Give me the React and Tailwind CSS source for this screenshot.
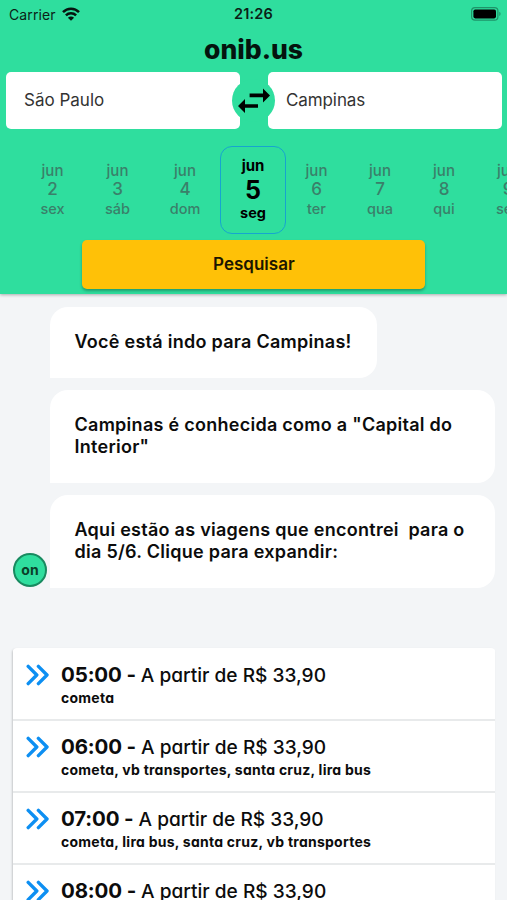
import React from 'react';

const days = [
    { month: 'jun', day: '2', week: 'sex', width: 'w-[65px]' },
    { month: 'jun', day: '3', week: 'sáb', width: 'w-[65px]' },
    { month: 'jun', day: '4', week: 'dom', width: 'w-[70px]' },
    { month: 'jun', day: '5', week: 'seg', width: 'w-[66px]', selected: true },
    { month: 'jun', day: '6', week: 'ter', width: 'w-[61px]' },
    { month: 'jun', day: '7', week: 'qua', width: 'w-[66px]' },
    { month: 'jun', day: '8', week: 'qui', width: 'w-[62px]' },
    { month: 'jun', day: '9', week: 'sex', width: 'w-[66px]' },
];

const trips = [
    { time: '05:00', price: 'R$ 33,90', companies: 'cometa' },
    { time: '06:00', price: 'R$ 33,90', companies: 'cometa, vb transportes, santa cruz, lira bus' },
    { time: '07:00', price: 'R$ 33,90', companies: 'cometa, lira bus, santa cruz, vb transportes' },
    { time: '08:00', price: 'R$ 33,90' },
];

const WifiIcon = () => (
    <svg width="18" height="14" viewBox="0 0 18 14" fill="none" stroke="#06150f" strokeWidth="2.5">
        <path d="M1 5.2C5.4 0.6 12.6 0.6 17 5.2" />
        <path d="M3.9 8.4C6.7 5.6 11.3 5.6 14.1 8.4" />
        <path d="M9 13.8L5.9 10.7C7.6 9.1 10.4 9.1 12.1 10.7Z" fill="#06150f" stroke="none" />
    </svg>
);

const BatteryIcon = () => (
    <svg width="31" height="14" viewBox="0 0 31 14" fill="none">
        <rect x="0.6" y="0.6" width="26.3" height="12.6" rx="3.4" stroke="#1f9469" strokeWidth="1.2" />
        <rect x="2.4" y="2.4" width="22.6" height="9" rx="1.8" fill="#000" />
        <path d="M28.3 4.8C30 5.4 30 8.4 28.3 9Z" fill="#1f9469" />
    </svg>
);

const SwapIcon = () => (
    <svg width="34" height="26" viewBox="0 0 34 26" fill="#000">
        <path d="M12.6 5.6H26V0.4L33 7.4L26 14.4V9.2H12.6Z" />
        <path d="M21 16.2H8V11L1 18L8 25V19.8H21Z" />
    </svg>
);

const ChevronsIcon = () => (
    <svg width="24" height="22" viewBox="0 0 24 22" fill="none" stroke="#0d8ff2" strokeWidth="3.4" strokeLinecap="round" strokeLinejoin="round">
        <path d="M2.2 2.4L10.8 11L2.2 19.6" />
        <path d="M12.4 2.4L21 11L12.4 19.6" />
    </svg>
);

const StatusBar = () => (
    <div className="grid h-[28px] grid-cols-3 items-center pl-[9px] pr-[5px] text-[14px] text-[#0b1f17]">
        <div className="flex items-center gap-[6px]">
            <span className="tracking-[0.1px]">Carrier</span>
            <WifiIcon />
        </div>
        <span className="pl-[2px] pr-[6px] text-center text-[14.5px] font-semibold tracking-[0.2px]">21:26</span>
        <div className="flex justify-end">
            <BatteryIcon />
        </div>
    </div>
);

const DayItem = ({ item }) => {
    if (item.selected) {
        return (
            <div className={`${item.width} flex h-[88px] shrink-0 flex-col items-center rounded-[12px] border border-[#16a5cf] pt-[9px] font-bold text-black`}>
                <span className="text-[15px] leading-[20px]">{item.month}</span>
                <span className="text-[25px] leading-[28px]">{item.day}</span>
                <span className="text-[14.5px] leading-[18px]">{item.week}</span>
            </div>
        );
    }
    return (
        <div className={`${item.width} flex h-[88px] shrink-0 flex-col items-center pt-[15px] font-medium text-[#3a806a]`}>
            <span className="text-[15px] leading-[19px]">{item.month}</span>
            <span className="text-[17px] leading-[19px]">{item.day}</span>
            <span className="text-[14.5px] leading-[19px]">{item.week}</span>
        </div>
    );
};

const Bubble = ({ className, children }) => (
    <div className={`rounded-[18px] rounded-bl-none bg-white pl-[24.5px] pt-[24px] text-[18px] font-semibold leading-[22px] tracking-[0.27px] text-[#0c0c0c] ${className}`}>
        {children}
    </div>
);

const TripRow = ({ trip }) => (
    <div className="flex h-[72px] items-start border-b-2 border-[#e8eaeb] bg-white pl-[13px] pt-[13px] [font-feature-settings:'cv11']">
        <div className="mt-[2px] w-[35px] shrink-0">
            <ChevronsIcon />
        </div>
        <div>
            <div className="whitespace-nowrap leading-[26px] text-[#0c0c0c]">
                <span className="mr-[5px] text-[20.5px] font-bold tracking-[-0.15px]">{trip.time} -</span>
                <span className="text-[19.1px] font-medium">A partir de {trip.price}</span>
            </div>
            <div className="whitespace-nowrap text-[14px] font-bold leading-[18px] tracking-[0.25px] text-[#0c0c0c]">{trip.companies}</div>
        </div>
    </div>
);

const App = () => (
    <div className="flex h-[900px] w-[507px] flex-col overflow-hidden bg-[#f3f5f7] font-['Inter',sans-serif]">
        <header className="relative h-[294px] shrink-0 bg-[#2fde9e] shadow-[0_1px_3px_rgba(0,0,0,0.3)]">
            <StatusBar />
            <h1 className="h-[44px] text-center text-[26.5px] font-extrabold leading-[43px] text-[#04140e] [font-feature-settings:'cv11']">onib.us</h1>
            <div className="relative flex h-[57px] justify-between pl-[6px] pr-[5px] text-[17px] text-[#333]">
                <div className="flex w-[234px] items-center rounded-[5px] bg-white pl-[18px]">São Paulo</div>
                <div className="flex w-[234px] items-center rounded-[5px] bg-white pl-[18px] tracking-[-0.1px]">Campinas</div>
                <div className="absolute left-[232px] top-[7px] flex h-[43px] w-[43px] items-center justify-center rounded-full bg-[#2fde9e]">
                    <SwapIcon />
                </div>
            </div>
            <div className="mt-[17px] flex overflow-hidden pl-[20px]">
                {days.map((item) => (
                    <DayItem key={item.day} item={item} />
                ))}
            </div>
            <button className="ml-[82.4px] mt-[6px] block h-[49px] w-[343px] rounded-[5px] bg-[#ffc107] text-[17px] font-semibold text-[#1c1600] shadow-[0_2px_3px_rgba(0,0,0,0.3)]">
                Pesquisar
            </button>
        </header>

        <main className="flex flex-col pt-[12.5px]">
            <div className="flex items-end pl-[13px]">
                <div className="mb-[1px] mr-[3px] flex h-[34px] w-[34px] items-center justify-center rounded-full border-2 border-[#188a60] bg-[#2fde9e] text-[14px] font-bold text-[#0b4029]">on</div>
                <div className="flex flex-col gap-[12px]">
                    <Bubble className="h-[71px] w-[327px]">Você está indo para Campinas!</Bubble>
                    <Bubble className="h-[93px] w-[445px]">
                        Campinas é conhecida como a "Capital do<br />Interior"
                    </Bubble>
                    <Bubble className="h-[93px] w-[445px]">
                        Aqui estão as viagens que encontrei&nbsp; para o<br />dia 5/6. Clique para expandir:
                    </Bubble>
                </div>
            </div>
            <div className="ml-[13px] mt-[60.5px] w-[482px] overflow-hidden rounded-t-[4px] bg-white pt-[1px] shadow-[-1px_1px_2px_rgba(0,0,0,0.18)]">
                {trips.map((trip) => (
                    <TripRow key={trip.time} trip={trip} />
                ))}
            </div>
        </main>
    </div>
);

export default App;
